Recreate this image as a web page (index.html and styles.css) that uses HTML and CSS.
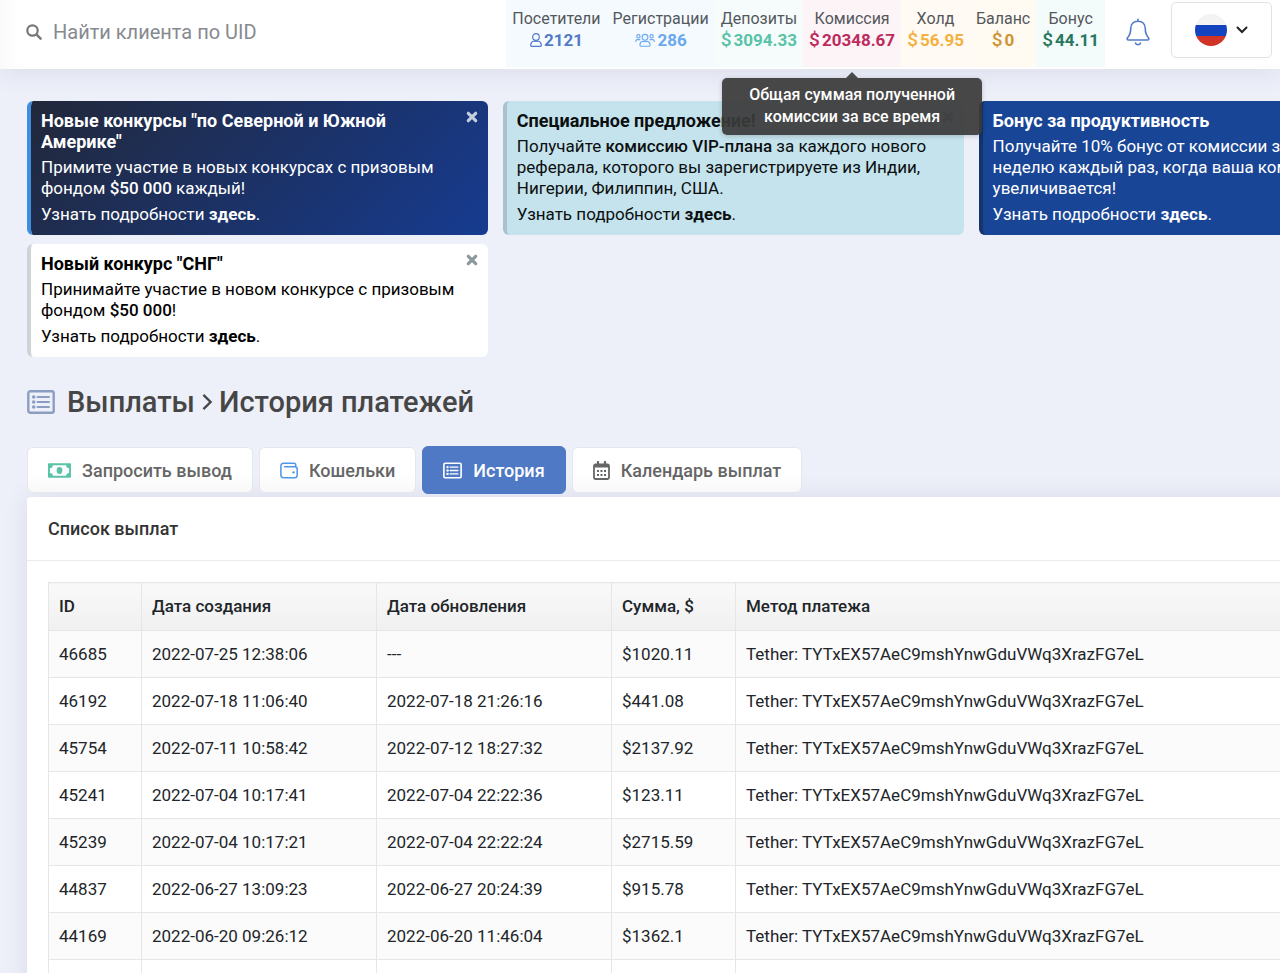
FILE: index.html
```html
<!DOCTYPE html>
<html lang="ru">
<head>
<meta charset="utf-8">
<meta name="viewport" content="width=device-width, initial-scale=1">
<title>История платежей</title>
<link rel="stylesheet" href="styles.css">
</head>
<body>
<svg class="sprite" aria-hidden="true">
  <symbol id="i-list" viewBox="0 0 28 24"><rect x="1.3" y="1.3" width="25.4" height="21.4" rx="2" fill="none" stroke="currentColor" stroke-width="2.4"/><path d="M10.5 7H22M10.5 12H22M10.5 17H22" fill="none" stroke="currentColor" stroke-width="2" stroke-linecap="round"/><circle cx="6.7" cy="7" r="1.8" fill="currentColor"/><circle cx="6.7" cy="12" r="1.8" fill="currentColor"/><circle cx="6.7" cy="17" r="1.8" fill="currentColor"/></symbol>
  <symbol id="i-close" viewBox="0 0 12 12"><path d="M2.3 2.3l7.4 7.4M9.7 2.3l-7.4 7.4" stroke="currentColor" stroke-width="3.2" stroke-linecap="round"/></symbol>
</svg>

<header class="topbar">
  <form class="search" role="search">
    <label for="uid" aria-label="Поиск клиента"><svg class="search-icon" viewBox="0 0 16 16"><circle cx="6.5" cy="6.5" r="5.2" fill="none" stroke="currentColor" stroke-width="2.2"/><path d="M10.6 10.6l4 4" stroke="currentColor" stroke-width="2.5" stroke-linecap="round"/></svg></label>
    <input id="uid" type="search" placeholder="Найти клиента по UID">
  </form>
  <div class="stats">
    <div class="stat visitors"><span class="stat-label">Посетители</span><span class="stat-value"><svg class="user" viewBox="0 0 12 14"><g fill="none" stroke="currentColor" stroke-width="1.2"><circle cx="6" cy="4" r="3.3"/><path d="M3.8 8C1.8 8.6.7 10 .7 12.1v.4q0 .8.8.8h9q.8 0 .8-.8v-.4c0-2.1-1.1-3.500-3.100-4.100M3.800 8q2.200.8 4.400 0"/></g></svg>2121</span></div>
    <div class="stat signups"><span class="stat-label">Регистрации</span><span class="stat-value"><svg class="users" viewBox="0 0 20 14"><g fill="none" stroke="currentColor" stroke-width="1.1"><circle cx="10" cy="4.300" r="2.900"/><path d="M7.800 8.200C6 8.500 5 9.700 5 11.500v.900q0 .900.900.900h8.200q.900 0 .900-.900v-.900c0-1.800-1-3-2.800-3.300q-2.200.800-4.400 0z"/><circle cx="3.400" cy="3.300" r="1.700"/><circle cx="16.600" cy="3.300" r="1.700"/><path d="M.7 9V8.400q0-1.800 1.800-1.800h1.600q.8 0 1.300.5M19.300 9V8.400q0-1.800-1.800-1.800h-1.600q-.8 0-1.300.5"/></g></svg>286</span></div>
    <div class="stat deposits"><span class="stat-label">Депозиты</span><span class="stat-value"><span class="cur">$</span>3094.33</span></div>
    <div class="stat commission"><span class="stat-label">Комиссия</span><span class="stat-value"><span class="cur">$</span>20348.67</span>
      <div class="tooltip" role="tooltip">Общая суммая полученной комиссии за все время</div></div>
    <div class="stat hold"><span class="stat-label">Холд</span><span class="stat-value"><span class="cur">$</span>56.95</span></div>
    <div class="stat balance"><span class="stat-label">Баланс</span><span class="stat-value"><span class="cur">$</span>0</span></div>
    <div class="stat bonus"><span class="stat-label">Бонус</span><span class="stat-value"><span class="cur">$</span>44.11</span></div>
  </div>
  <button class="bell" type="button" aria-label="Уведомления"><svg viewBox="0 0 24 28"><g fill="none" stroke="currentColor" stroke-width="1.6" stroke-linecap="round" stroke-linejoin="round"><path d="M12 3.200c-4.600 0-7.300 3.300-7.300 7.600 0 5.400-1.300 6.900-3.100 8.900-.9 1-.4 2.300.9 2.300h19c1.300 0 1.800-1.300.9-2.300-1.800-2-3.100-3.500-3.100-8.900 0-4.300-2.700-7.600-7.300-7.600zM12 3V1.400"/><path d="M9.500 25q.6 1.800 2.500 1.800t2.500-1.800"/></g></svg></button>
  <button class="lang" type="button" aria-label="Русский">
    <svg class="flag" viewBox="0 0 32 32"><clipPath id="round"><circle cx="16" cy="16" r="16"/></clipPath><g clip-path="url(#round)"><path fill="#f3f3f3" d="M0 0h32v11H0z"/><path fill="#1443c0" d="M0 11h32v11H0z"/><path fill="#cf3427" d="M0 22h32v10H0z"/></g></svg>
    <svg class="chevron" viewBox="0 0 12 8"><path d="M1.500 1.500L6 6l4.500-4.500" fill="none" stroke="currentColor" stroke-width="2" stroke-linecap="round"/></svg>
  </button>
</header>

<main class="page">
  <section class="notices">
    <article class="notice navy">
      <h2>Новые конкурсы "по Северной и Южной Америке"</h2>
      <p>Примите участие в новых конкурсах с призовым фондом <b>$50 000</b> каждый!</p>
      <p>Узнать подробности <a href="#">здесь</a>.</p>
      <button class="close" type="button" aria-label="Закрыть"><svg><use href="#i-close"/></svg></button>
    </article>
    <article class="notice cyan">
      <h2>Специальное предложение!</h2>
      <p>Получайте <b>комиссию VIP-плана</b> за каждого нового реферала, которого вы зарегистрируете из Индии, Нигерии, Филиппин, США.</p>
      <p>Узнать подробности <a href="#">здесь</a>.</p>
      <button class="close" type="button" aria-label="Закрыть"><svg><use href="#i-close"/></svg></button>
    </article>
    <article class="notice blue">
      <h2>Бонус за продуктивность</h2>
      <p>Получайте 10% бонус от комиссии за<br>неделю каждый раз, когда ваша комиссия<br>увеличивается!</p>
      <p>Узнать подробности <a href="#">здесь</a>.</p>
      <button class="close" type="button" aria-label="Закрыть"><svg><use href="#i-close"/></svg></button>
    </article>
    <article class="notice white">
      <h2>Новый конкурс "СНГ"</h2>
      <p>Принимайте участие в новом конкурсе с призовым фондом <b>$50 000</b>!</p>
      <p>Узнать подробности <a href="#">здесь</a>.</p>
      <button class="close" type="button" aria-label="Закрыть"><svg><use href="#i-close"/></svg></button>
    </article>
  </section>

  <h1 class="title"><svg class="title-icon"><use href="#i-list"/></svg><span>Выплаты</span><svg class="crumb" viewBox="0 0 12 20"><path d="M2 2l8 8-8 8" fill="none" stroke="currentColor" stroke-width="2.600"/></svg><span>История платежей</span></h1>

  <nav class="tabs">
    <a class="tab" href="#"><svg class="cash" viewBox="0 0 24 15"><path fill="currentColor" fill-rule="evenodd" d="M1 0h22q1 0 1 1v13q0 1-1 1H1q-1 0-1-1V1Q0 0 1 0zM5 2q0 3-3 3v5q3 0 3 3h14q0-3 3-3V5q-3 0-3-3z"/><ellipse cx="12" cy="7.500" rx="3" ry="3.600" fill="currentColor"/></svg>Запросить вывод</a>
    <a class="tab" href="#"><svg class="wallet" viewBox="0 0 20 18"><g fill="none" stroke="currentColor" stroke-width="1.700"><path d="M17.500 4.800V3q0-2-2-2H4Q1 1 1 4v10q0 3 3 3h12.500q2.600 0 2.600-2.600V7.400q0-2.600-2.600-2.600H4.500"/></g><circle cx="15" cy="11" r="1.300" fill="currentColor"/></svg>Кошельки</a>
    <a class="tab active" href="#" aria-current="page"><svg class="list"><use href="#i-list"/></svg>История</a>
    <a class="tab" href="#"><svg class="cal" viewBox="0 0 17 19"><path d="M5 1v3M12 1v3" stroke="currentColor" stroke-width="2.200" stroke-linecap="round"/><rect x="1" y="3.500" width="15" height="14.500" rx="1.500" fill="none" stroke="currentColor" stroke-width="1.800"/><path d="M1 3h15v3.500H1z" fill="currentColor"/><path d="M4 10h2m1.500 0h2m1.500 0h2M4 14h2m1.500 0h2m1.500 0h2" stroke="currentColor" stroke-width="2"/></svg>Календарь выплат</a>
  </nav>

  <section class="panel">
    <h2 class="panel-title">Список выплат</h2>
    <div class="panel-body">
      <table>
        <colgroup><col class="c-id"><col class="c-date"><col class="c-date"><col class="c-sum"><col></colgroup>
        <thead><tr><th>ID</th><th>Дата создания</th><th>Дата обновления</th><th>Сумма, $</th><th>Метод платежа</th></tr></thead>
        <tbody>
          <tr><td>46685</td><td>2022-07-25 12:38:06</td><td>---</td><td>$1020.11</td><td>Tether: TYTxEX57AeC9mshYnwGduVWq3XrazFG7eL</td></tr>
          <tr><td>46192</td><td>2022-07-18 11:06:40</td><td>2022-07-18 21:26:16</td><td>$441.08</td><td>Tether: TYTxEX57AeC9mshYnwGduVWq3XrazFG7eL</td></tr>
          <tr><td>45754</td><td>2022-07-11 10:58:42</td><td>2022-07-12 18:27:32</td><td>$2137.92</td><td>Tether: TYTxEX57AeC9mshYnwGduVWq3XrazFG7eL</td></tr>
          <tr><td>45241</td><td>2022-07-04 10:17:41</td><td>2022-07-04 22:22:36</td><td>$123.11</td><td>Tether: TYTxEX57AeC9mshYnwGduVWq3XrazFG7eL</td></tr>
          <tr><td>45239</td><td>2022-07-04 10:17:21</td><td>2022-07-04 22:22:24</td><td>$2715.59</td><td>Tether: TYTxEX57AeC9mshYnwGduVWq3XrazFG7eL</td></tr>
          <tr><td>44837</td><td>2022-06-27 13:09:23</td><td>2022-06-27 20:24:39</td><td>$915.78</td><td>Tether: TYTxEX57AeC9mshYnwGduVWq3XrazFG7eL</td></tr>
          <tr><td>44169</td><td>2022-06-20 09:26:12</td><td>2022-06-20 11:46:04</td><td>$1362.1</td><td>Tether: TYTxEX57AeC9mshYnwGduVWq3XrazFG7eL</td></tr>
          <tr><td>&nbsp;</td><td></td><td></td><td></td><td></td></tr>
        </tbody>
      </table>
    </div>
  </section>
</main>
</body>
</html>
```

FILE: styles.css
```css
*, *::before, *::after { box-sizing: border-box; }
body {
  margin: 0;
  height: 100vh;
  overflow: hidden;
  background: #edf0f9;
  color: #212529;
  font: 17px/21px Roboto, "Liberation Sans", sans-serif;
}
h1, h2, p { margin: 0; }
a { color: inherit; text-decoration: none; }
button { padding: 0; border: 0; background: none; font: inherit; cursor: pointer; }
svg { display: block; flex: none; }
.sprite { position: absolute; width: 0; height: 0; }

.topbar {
  position: relative;
  z-index: 2;
  display: flex;
  align-items: flex-start;
  height: 69px;
  padding: 0 8px 0 26px;
  background: linear-gradient(90deg, #fafafa, #fff 20px);
  box-shadow: 0 0 28px rgba(82, 63, 130, .14);
}
.search { display: flex; flex: 1; align-items: center; gap: 11px; height: 64px; min-width: 0; }
.search-icon { width: 16px; height: 16px; color: #777; }
.search input {
  width: 100%;
  min-width: 0;
  padding: 0;
  border: 0;
  outline: 0;
  background: none;
  font: 20px/24px Roboto, "Liberation Sans", sans-serif;
}
.search input::placeholder { color: #868a90; opacity: 1; }

.stats { display: flex; height: 67px; }
.stat {
  position: relative;
  display: flex;
  flex-direction: column;
  align-items: center;
  padding: 8px 6px 0;
}
.stat-label { color: #54585c; font-size: 16px; }
.stat-value { display: flex; align-items: center; font-weight: 700; line-height: 22px; }
.cur { margin-right: 2px; font-size: 19px; font-weight: 500; }
.user { width: 12px; height: 14px; margin-right: 2px; }
.users { width: 20px; height: 14px; margin-right: 3px; }
.visitors { background: #f5faff; color: #527ac6; }
.signups { background: #f5faff; color: #6ba9ee; }
.deposits { background: #f6fcfc; color: #58c3a6; }
.commission { background: #fdf4f8; color: #bd2b5c; }
.hold { background: #fffaf3; color: #f3b13f; }
.balance { background: #fffbf3; color: #d09434; }
.bonus { background: #f4fbfb; color: #28775f; }

.tooltip {
  position: absolute;
  top: 78px;
  left: 50%;
  width: 260px;
  padding: 6px 20px 7px;
  border-radius: 5px;
  background: rgba(58, 58, 58, .93);
  box-shadow: 0 1px 5px rgba(0, 0, 0, .2);
  color: #fff;
  font-size: 16px;
  font-weight: 500;
  line-height: 22px;
  text-align: center;
  transform: translateX(-50%);
}
.tooltip::before {
  content: "";
  position: absolute;
  bottom: 100%;
  left: 50%;
  margin-left: -6px;
  border: 6px solid transparent;
  border-top: 0;
  border-bottom-color: #4a4a4d;
}

.bell { margin: 18px 21px 0; color: #527ac6; }
.bell svg { width: 24px; height: 28px; }
.lang {
  display: flex;
  align-items: center;
  justify-content: center;
  gap: 9px;
  width: 101px;
  height: 56px;
  margin-top: 2px;
  border: 1px solid #e2e2e2;
  border-radius: 5px;
  color: #222;
}
.flag { width: 32px; height: 32px; }
.chevron { width: 12px; height: 8px; }

.page { width: 114%; padding: 32px 20px 0 27px; }
.notices {
  display: grid;
  grid-template-columns: repeat(3, 36vw);
  gap: 9px 15px;
}
.notice {
  position: relative;
  padding: 9px 40px 10px 10px;
  border-left: 4px solid;
  border-radius: 6px;
}
.notice h2 { margin-bottom: 5px; font-size: 18px; font-weight: 700; line-height: 21px; }
.notice p { margin-right: -20px; }
.notice p + p { margin-top: 5px; }
.notice b { font-weight: 500; }
.notice a { font-weight: 700; }
.navy { border-color: #3e8ee0; background: linear-gradient(135deg, #22283a, #163b90) padding-box; color: #fff; }
.cyan { border-color: #a8c3cc; background: #c5e3ec; color: #0b0f10; }
.blue { border-color: #153467; background: #184596; color: #fff; }
.white { border-color: #cfd3d6; background: #fff; color: #000; }
.close { position: absolute; top: 10px; right: 10px; color: #8b999d; }
.navy .close { color: #c5cede; }
.close svg { width: 12px; height: 12px; }

.title {
  display: flex;
  align-items: center;
  margin-top: 27px;
  color: #464646;
  font-size: 29px;
  font-weight: 500;
  line-height: 36px;
}
.title-icon { width: 28px; height: 24px; margin-right: 12px; color: #8c9dc2; }
.crumb { width: 12px; height: 18px; margin: 0 6px; }

.tabs { display: flex; align-items: center; gap: 6px; margin-top: 26px; }
.tab {
  display: flex;
  align-items: center;
  gap: 11px;
  height: 46px;
  padding: 0 20px;
  border: 1px solid #e6e7eb;
  border-radius: 6px;
  background: linear-gradient(#fff 60%, #f8f8f8);
  color: #666;
  font-size: 18px;
  font-weight: 500;
}
.tab.active { height: 48px; border-color: #4f78c5; background: #4f78c5; color: #fff; }
.cash { width: 23px; height: 15px; color: #58c3a6; }
.wallet { width: 18px; height: 17px; color: #4f97e8; }
.list { width: 19px; height: 17px; }
.cal { width: 17px; height: 19px; color: #666; }

.panel {
  margin-top: 3px;
  border-radius: 4px;
  background: #fff;
  box-shadow: 0 0 24px rgba(60, 60, 80, .1);
}
.panel-title {
  padding: 21px;
  border-bottom: 1px solid #ebebee;
  color: #333;
  font-size: 18px;
  font-weight: 500;
}
.panel-body { padding: 21px; }
table { width: 100%; border-collapse: collapse; table-layout: fixed; }
.c-id { width: 93px; }
.c-date { width: 235px; }
.c-sum { width: 124px; }
th, td { height: 47px; padding: 0 10px; border: 1px solid #e6e6e8; text-align: left; }
th { height: 48px; background: linear-gradient(#f9f9f9, #f0f0f0); font-weight: 500; }
tbody tr:nth-child(odd) { background: #fbfbfb; }
```
